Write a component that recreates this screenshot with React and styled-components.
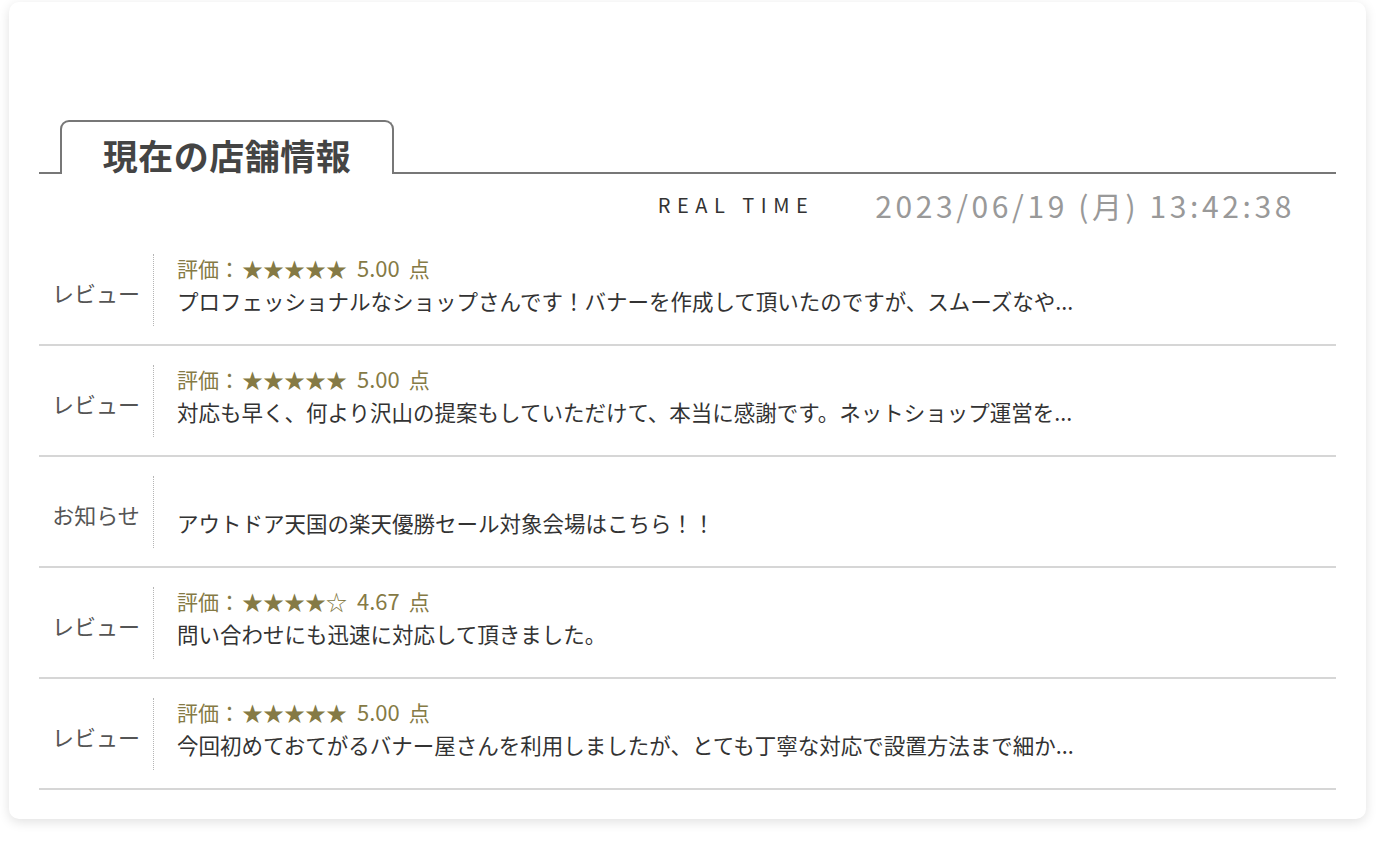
import React from 'react';
import styled, { createGlobalStyle } from 'styled-components';

const GlobalStyle = createGlobalStyle`
  html, body {
    margin: 0;
    padding: 0;
    background: #fff;
  }
  body {
    font-family: "Noto Sans CJK JP", "Noto Sans", sans-serif;
    color: #333;
  }
`;

const Page = styled.div`
  padding: 2px 0 30px 9px;
`;

const Card = styled.section`
  width: 1357px;
  box-sizing: border-box;
  padding: 118px 30px 29px;
  background: #fff;
  border-radius: 10px;
  box-shadow: 0 3px 12px rgba(0, 0, 0, 0.12);
`;

const Heading = styled.div`
  display: flex;
  align-items: flex-end;
`;

const Rule = styled.div`
  flex: ${(p) => (p.grow ? 1 : '0 0 21px')};
  border-bottom: 2px solid #777;
`;

const Tab = styled.h2`
  margin: 0;
  width: 334px;
  height: 54px;
  box-sizing: border-box;
  padding-top: 18px;
  border: 2px solid #777;
  border-bottom: none;
  border-radius: 9px 9px 0 0;
  text-align: center;
  font-size: 35px;
  line-height: 30px;
  font-weight: 700;
  color: #444;
  letter-spacing: 0.5px;
`;

const Meta = styled.div`
  height: 61px;
  display: flex;
  align-items: center;
  justify-content: flex-end;
  gap: 61px;
  padding-right: 41px;
`;

const RealTime = styled.span`
  font-size: 20px;
  letter-spacing: 6.5px;
  color: #333;
`;

const Clock = styled.span`
  font-size: 30px;
  letter-spacing: 3.6px;
  color: #999;
  font-weight: 400;
`;

const List = styled.ul`
  list-style: none;
  margin: 0;
  padding: 0;
`;

const Row = styled.li`
  display: flex;
  padding: 19px 0 18px;
  border-bottom: 2px solid #d6d6d6;
`;

const Kind = styled.div`
  flex: 0 0 115px;
  display: flex;
  align-items: center;
  justify-content: center;
  padding-top: 4px;
  box-sizing: border-box;
  border-right: 1px dotted #b5b5b5;
  font-size: 22px;
  color: #555;
`;

const Body = styled.div`
  flex: 1;
  padding: 0 0 10px 23px;
  min-height: 62px;
`;

const Rating = styled.div`
  display: flex;
  align-items: baseline;
  height: 26px;
  font-size: 21px;
  line-height: 26px;
  color: #857a45;
`;

const Score = styled.span`
  margin-left: ${(p) => p.gap}px;
  font-size: ${(p) => (p.big ? 22 : 21)}px;
`;

const Text = styled.p`
  margin: 6px 0 0;
  font-size: 21.5px;
  line-height: 30px;
  color: #333;
`;

const items = [
  {
    kind: 'レビュー',
    stars: '★★★★★',
    score: '5.00',
    text: 'プロフェッショナルなショップさんです！バナーを作成して頂いたのですが、スムーズなや...',
  },
  {
    kind: 'レビュー',
    stars: '★★★★★',
    score: '5.00',
    text: '対応も早く、何より沢山の提案もしていただけて、本当に感謝です。ネットショップ運営を...',
  },
  {
    kind: 'お知らせ',
    text: 'アウトドア天国の楽天優勝セール対象会場はこちら！！',
  },
  {
    kind: 'レビュー',
    stars: '★★★★☆',
    score: '4.67',
    text: '問い合わせにも迅速に対応して頂きました。',
  },
  {
    kind: 'レビュー',
    stars: '★★★★★',
    score: '5.00',
    text: '今回初めておてがるバナー屋さんを利用しましたが、とても丁寧な対応で設置方法まで細か...',
  },
];

const App = () => {
  return (
    <Page>
      <GlobalStyle />
      <Card>
        <Heading>
          <Rule />
          <Tab>現在の店舗情報</Tab>
          <Rule grow />
        </Heading>
        <Meta>
          <RealTime>REAL TIME</RealTime>
          <Clock>2023/06/19 (月) 13:42:38</Clock>
        </Meta>
        <List>
          {items.map((item, i) => (
            <Row key={i}>
              <Kind>{item.kind}</Kind>
              <Body>
                <Rating>
                  {item.stars && (
                    <>
                      <span>評価：</span>
                      <Score gap={2}>{item.stars}</Score>
                      <Score gap={10} big>{item.score}</Score>
                      <Score gap={9}>点</Score>
                    </>
                  )}
                </Rating>
                <Text>{item.text}</Text>
              </Body>
            </Row>
          ))}
        </List>
      </Card>
    </Page>
  );
};

export default App;
